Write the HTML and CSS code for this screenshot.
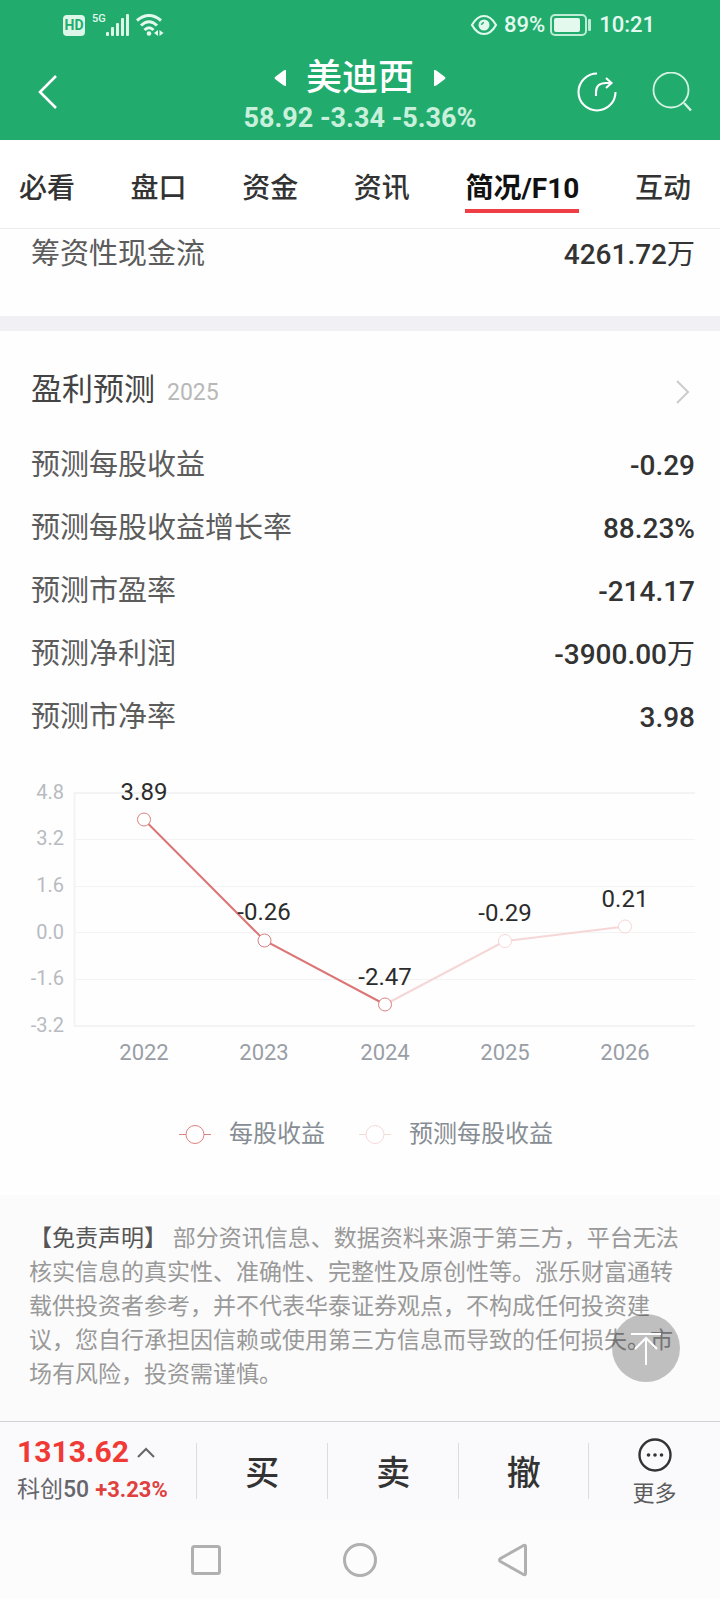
FILE: index.html
```html
<!DOCTYPE html>
<html lang="zh-CN">
<head>
<meta charset="utf-8">
<meta name="viewport" content="width=device-width, initial-scale=1">
<title>美迪西 简况/F10</title>
<link rel="stylesheet" href="styles.css">
</head>
<body>
<header class="header">
  <div class="status">
    <div class="status-group">
      <span class="hd">HD</span>
      <span class="net">5G</span>
      <svg class="signal" width="24" height="22" viewBox="0 0 24 22" fill="#dcf6e8" aria-hidden="true">
        <rect x="0" y="18" width="3" height="4" rx="1"/><rect x="5" y="13" width="3" height="9" rx="1"/><rect x="10" y="9" width="3" height="13" rx="1"/><rect x="15" y="4" width="3" height="18" rx="1"/><rect x="20" y="0" width="3" height="22" rx="1"/>
      </svg>
      <svg class="wifi" width="28" height="22" viewBox="0 0 28 22" fill="none" stroke="#e4f9ee" stroke-width="3" aria-hidden="true">
        <path d="M1 6.500Q13-3.500 25 6.500M5 11.500Q13 4 21 11.500M8.500 16Q13 11.500 17.500 16"/>
        <circle cx="13" cy="19.500" r="2.300" fill="#e4f9ee" stroke="none"/>
        <path d="M22 16v6l-4-3zM23.500 16v6l4-3z" fill="#e4f9ee" stroke="none"/>
      </svg>
    </div>
    <div class="status-group status-right">
      <svg width="28" height="22" viewBox="0 0 28 22" fill="none" stroke="#e4f9ee" stroke-width="2.2" aria-hidden="true">
        <path d="M2 11Q7 2 14 2T26 11Q21 20 14 20T2 11Z"/>
        <circle cx="14" cy="11" r="5.500" fill="#e4f9ee" stroke="none"/><path d="M11.500 11a3 3 0 0 1 2.500-2.500" stroke="#21ac6e" stroke-width="1.500"/>
      </svg>
      <span class="percent">89%</span>
      <svg class="battery" width="42" height="22" viewBox="0 0 42 22" aria-hidden="true">
        <rect x="1" y="1" width="35" height="20" rx="4" fill="none" stroke="#bfecd5" stroke-width="2"/>
        <rect x="4" y="4" width="26" height="14" rx="2" fill="#e4f9ee"/><rect x="38" y="5" width="3" height="12" rx="1" fill="#bfecd5"/>
      </svg>
      <span>10:21</span>
    </div>
  </div>
  <div class="titlebar">
    <button class="icon-btn back" aria-label="返回"><svg width="22" height="36" viewBox="0 0 22 36" fill="none" stroke="#fff" stroke-width="2.600"><path d="M19 2L3 18l16 16"/></svg></button>
    <div class="stock">
      <div class="stock-name">
        <button class="icon-btn" aria-label="上一只"><svg width="12" height="18" viewBox="0 0 12 18" fill="#fff"><path d="M12 1v16q-2 0-3-1L1 10q-1-1 0-2l8-6q1-1 3-1z"/></svg></button>
        <h1>美迪西</h1>
        <button class="icon-btn" aria-label="下一只"><svg width="12" height="18" viewBox="0 0 12 18" fill="#fff"><path d="M0 1v16q2 0 3-1l8-6q1-1 0-2L3 2Q2 1 0 1z"/></svg></button>
      </div>
      <p class="quote">58.92 -3.34 -5.36%</p>
    </div>
    <div class="actions">
      <button class="icon-btn" aria-label="分享"><svg width="40" height="40" viewBox="0 0 40 40" fill="none" stroke="#fff" stroke-width="2.100"><path d="M20 1.500A18.500 18.500 0 1 0 38.500 20M19 24v-4q0-9 10-9h5M29 6l5.500 5-5.500 5"/></svg></button>
      <button class="icon-btn" aria-label="搜索"><svg width="40" height="40" viewBox="0 0 40 40" fill="none" stroke="#d5f3e3"><circle cx="19" cy="18" r="17.500" stroke-width="1.800"/><path d="M32 31l7 7.500" stroke-width="2.400"/></svg></button>
    </div>
  </div>
</header>

<nav class="tabs">
  <a href="#">必看</a><a href="#">盘口</a><a href="#">资金</a><a href="#">资讯</a><a href="#" class="active" aria-current="page">简况/F10</a><a href="#">互动</a>
</nav>

<main>
  <section class="cash">
    <dl><div class="row row-cash"><dt>筹资性现金流</dt><dd>4261.72<span class="unit">万</span></dd></div></dl>
  </section>

  <section class="forecast">
    <a class="section-title" href="#">
      <h2>盈利预测</h2><span class="year">2025</span>
      <svg class="chevron" width="14" height="24" viewBox="0 0 14 24" fill="none" stroke="#ccc" stroke-width="2"><path d="M1 1l11 11L1 23"/></svg>
    </a>
    <dl>
      <div class="row"><dt>预测每股收益</dt><dd>-0.29</dd></div>
      <div class="row"><dt>预测每股收益增长率</dt><dd>88.23%</dd></div>
      <div class="row"><dt>预测市盈率</dt><dd>-214.17</dd></div>
      <div class="row"><dt>预测净利润</dt><dd>-3900.00<span class="unit">万</span></dd></div>
      <div class="row"><dt>预测市净率</dt><dd>3.98</dd></div>
    </dl>
    <svg class="chart" viewBox="0 0 720 320" role="img" aria-label="每股收益与预测每股收益">
      <g stroke="#f3f3f4">
        <path d="M74 33H695M74.500 32V267M74 266H695" stroke-width="2"/>
        <path d="M75 79.500H695M75 126.500H695M75 172.500H695M75 219.500H695"/>
      </g>
      <g class="axis-y"><text x="64" y="39">4.8</text><text x="64" y="85">3.2</text><text x="64" y="132">1.6</text><text x="64" y="179">0.0</text><text x="64" y="225">-1.6</text><text x="64" y="272">-3.2</text></g>
      <g class="axis-x"><text x="144" y="300">2022</text><text x="264" y="300">2023</text><text x="385" y="300">2024</text><text x="505" y="300">2025</text><text x="625" y="300">2026</text></g>
      <path d="M385 244.500L505 181L625 166.500" fill="none" stroke="#f6d6d6" stroke-width="2"/>
      <path d="M144 59.500L264.500 180.500L385 244.500" fill="none" stroke="#dc7575" stroke-width="2"/>
      <g fill="#fff" stroke="#d98080"><circle cx="144" cy="59.500" r="6.500"/><circle cx="264.500" cy="180.500" r="6.500"/><circle cx="385" cy="244.500" r="6.500"/></g>
      <g fill="#fff" stroke="#f6d6d6"><circle cx="505" cy="181" r="6.500"/><circle cx="625" cy="166.500" r="6.500"/></g>
      <g class="point"><text x="144" y="40">3.89</text><text x="264" y="160">-0.26</text><text x="385" y="225">-2.47</text><text x="505" y="161">-0.29</text><text x="625" y="147">0.21</text></g>
    </svg>
    <div class="legend">
      <span class="legend-item"><svg width="32" height="20" viewBox="0 0 32 20" fill="#fff" stroke="#dc8080"><path d="M0 10.500H32"/><circle cx="16" cy="10.500" r="9"/></svg>每股收益</span>
      <span class="legend-item"><svg width="32" height="20" viewBox="0 0 32 20" fill="#fff" stroke="#f6d9d9"><path d="M0 10.500H32"/><circle cx="16" cy="10.500" r="9"/></svg>预测每股收益</span>
    </div>
  </section>

  <section class="disclaimer">
    <p><strong>【免责声明】</strong> 部分资讯信息、数据资料来源于第三方，平台无法核实信息的真实性、准确性、完整性及原创性等。涨乐财富通转载供投资者参考，并不代表华泰证券观点，不构成任何投资建议，您自行承担因信赖或使用第三方信息而导致的任何损失。市场有风险，投资需谨慎。</p>
    <button class="to-top" aria-label="回到顶部"><svg width="32" height="34" viewBox="0 0 32 34" fill="none" stroke="#fff" stroke-width="2"><path d="M1 3H31M16 34V7M5 18L16 7l11 11"/></svg></button>
  </section>
</main>

<footer>
  <div class="trade">
    <button class="index">
      <span class="index-value">1313.62<svg width="18" height="12" viewBox="0 0 18 12" fill="none" stroke="#666" stroke-width="2"><path d="M1 11l8-8 8 8"/></svg></span>
      <span class="index-name"><span>科创<span class="index-num">50</span></span><b>+3.23%</b></span>
    </button>
    <button class="trade-btn">买</button>
    <button class="trade-btn">卖</button>
    <button class="trade-btn">撤</button>
    <button class="more">
      <svg width="34" height="34" viewBox="0 0 34 34" fill="#333"><circle cx="17" cy="17" r="15.500" fill="none" stroke="#333" stroke-width="2.400"/><circle cx="10.500" cy="17" r="1.800"/><circle cx="17" cy="17" r="1.800"/><circle cx="23.500" cy="17" r="1.800"/></svg>
      更多
    </button>
  </div>
  <div class="sysnav">
    <button aria-label="最近任务"><svg width="34" height="34" viewBox="0 0 34 34"><rect x="3.500" y="3.500" width="27" height="27" rx="2"/></svg></button>
    <button aria-label="主屏幕"><svg width="34" height="34" viewBox="0 0 34 34"><circle cx="17" cy="17" r="15.500"/></svg></button>
    <button aria-label="返回"><svg width="34" height="34" viewBox="0 0 34 34"><path d="M28.500 3.500v27q0 2-2 1L3.500 18.500q-2-1.500 0-3L26.500 2.500q2-1 2 1z"/></svg></button>
  </div>
</footer>
</body>
</html>
```
FILE: styles.css
```css
* { box-sizing: border-box; }

body {
  margin: 0;
  background: #fefefe;
  color: #333;
  font-family: Roboto, "Noto Sans CJK SC", sans-serif;
  font-size: 28px;
}

h1, h2, p, dl, dd { margin: 0; font-weight: 400; }
a { color: inherit; text-decoration: none; }
button { padding: 0; border: 0; background: none; color: inherit; font: inherit; }
svg { display: block; flex: none; }

.header { padding-bottom: 6px; background: #21ac6e; color: #fff; }

.status {
  display: flex;
  justify-content: space-between;
  padding: 13px 65px 0 63px;
  color: #e4f9ee;
  font-size: 22px;
  font-weight: 500;
  line-height: 24px;
}
.status-group { display: flex; align-items: center; }
.hd {
  width: 22px;
  border-radius: 4px;
  background: #dcf6e8;
  color: #21ac6e;
  font-size: 14px;
  font-weight: 700;
  line-height: 21px;
  text-align: center;
}
.net { align-self: flex-start; margin-left: 7px; font-size: 11px; line-height: 12px; }
.wifi { margin-left: 6px; }
.percent { margin: 0 5px 0 6px; }
.battery { margin-right: 7px; }

.titlebar {
  display: grid;
  grid-template-columns: 1fr auto 1fr;
  align-items: center;
  padding: 13px 28px 0;
}
.icon-btn { display: flex; align-items: center; justify-self: start; }
.back { margin-left: 9px; }
.stock { padding-top: 4px; }
.stock-name { display: flex; align-items: center; justify-content: center; gap: 20px; }
.stock-name h1 { font-size: 36px; font-weight: 500; line-height: 48px; }
.quote { color: #c9f0dc; font-size: 27px; font-weight: 700; line-height: 32px; text-align: center; }
.actions { display: flex; justify-content: flex-end; gap: 35px; }

.tabs {
  display: flex;
  justify-content: space-between;
  padding: 28px 29px 15px 19px;
  border-bottom: 1px solid #ebebeb;
  background: #fff;
  font-size: 28px;
  font-weight: 500;
}
.tabs a { border-bottom: 4px solid transparent; line-height: 41px; }
.tabs .active { border-color: #ef3e46; color: #111; font-weight: 700; }

.row {
  display: flex;
  justify-content: space-between;
  padding: 0 25px 0 31px;
  line-height: 63px;
}
.row dt { color: #5c5c5c; font-size: 29px; }
.row dd { font-weight: 500; }
.unit { font-weight: 400; }
.cash { padding-bottom: 36px; border-bottom: 15px solid #f0f0f5; }
.row-cash { line-height: 51px; }

.section-title {
  display: flex;
  align-items: baseline;
  padding: 34px 30px 16px 31px;
  line-height: 50px;
}
.section-title h2 { font-size: 31px; color: #444; }
.year { margin-left: 12px; color: #b8b8b8; font-size: 23px; }
.chevron { align-self: center; margin-left: auto; }

.chart { width: 100%; height: auto; margin-top: 11px; }
.axis-y { fill: #b8bbc0; font-size: 20px; text-anchor: end; }
.axis-x { fill: #999ea6; font-size: 22px; text-anchor: middle; }
.point { fill: #2c2c2c; font-size: 24px; text-anchor: middle; }

.legend {
  display: flex;
  justify-content: center;
  gap: 34px;
  padding: 36px 0 43px 12px;
  color: #878d94;
  font-size: 24px;
  line-height: 36px;
}
.legend-item { display: flex; align-items: center; gap: 18px; }

.disclaimer {
  position: relative;
  padding: 27px 29px 29px;
  background: #fbfbfb;
  color: #999;
  font-size: 23px;
  line-height: 34px;
}
.disclaimer strong { color: #555; font-weight: 400; }
.to-top {
  position: absolute;
  right: 40px;
  bottom: 39px;
  display: flex;
  align-items: center;
  justify-content: center;
  width: 68px;
  height: 68px;
  border-radius: 50%;
  background: rgba(0, 0, 0, 0.24);
}

.trade {
  display: grid;
  grid-template-columns: 3fr 2fr 2fr 2fr 2fr;
  align-items: center;
  padding: 11px 0;
  border-top: 1px solid #d2d2d6;
  background: #fafafc;
}
.index {
  display: flex;
  flex-direction: column;
  padding-left: 17px;
  text-align: left;
}
.index-value {
  display: flex;
  align-items: center;
  gap: 8px;
  color: #f03a36;
  font-size: 30px;
  font-weight: 700;
  line-height: 38px;
}
.index-name { display: flex; gap: 6px; color: #66666c; font-size: 23px; line-height: 38px; }
.index-num { font-weight: 500; }
.index-name b { color: #e0403e; font-size: 22px; }
.trade-btn { padding-top: 4px; border-left: 1px solid #dcdce0; font-size: 34px; font-weight: 500; line-height: 52px; }
.trade-btn:nth-last-child(2) { border-right: 1px solid #dcdce0; }
.more {
  display: flex;
  flex-direction: column;
  align-items: center;
  gap: 8px;
  padding-top: 3px;
  color: #5c5c5c;
  font-size: 22px;
  line-height: 28px;
}

.sysnav { display: flex; justify-content: center; gap: 120px; padding: 23px 0 22px; background: #fcfcfc; }
.sysnav svg { fill: none; stroke: #b0b0b0; stroke-width: 3; }
```
